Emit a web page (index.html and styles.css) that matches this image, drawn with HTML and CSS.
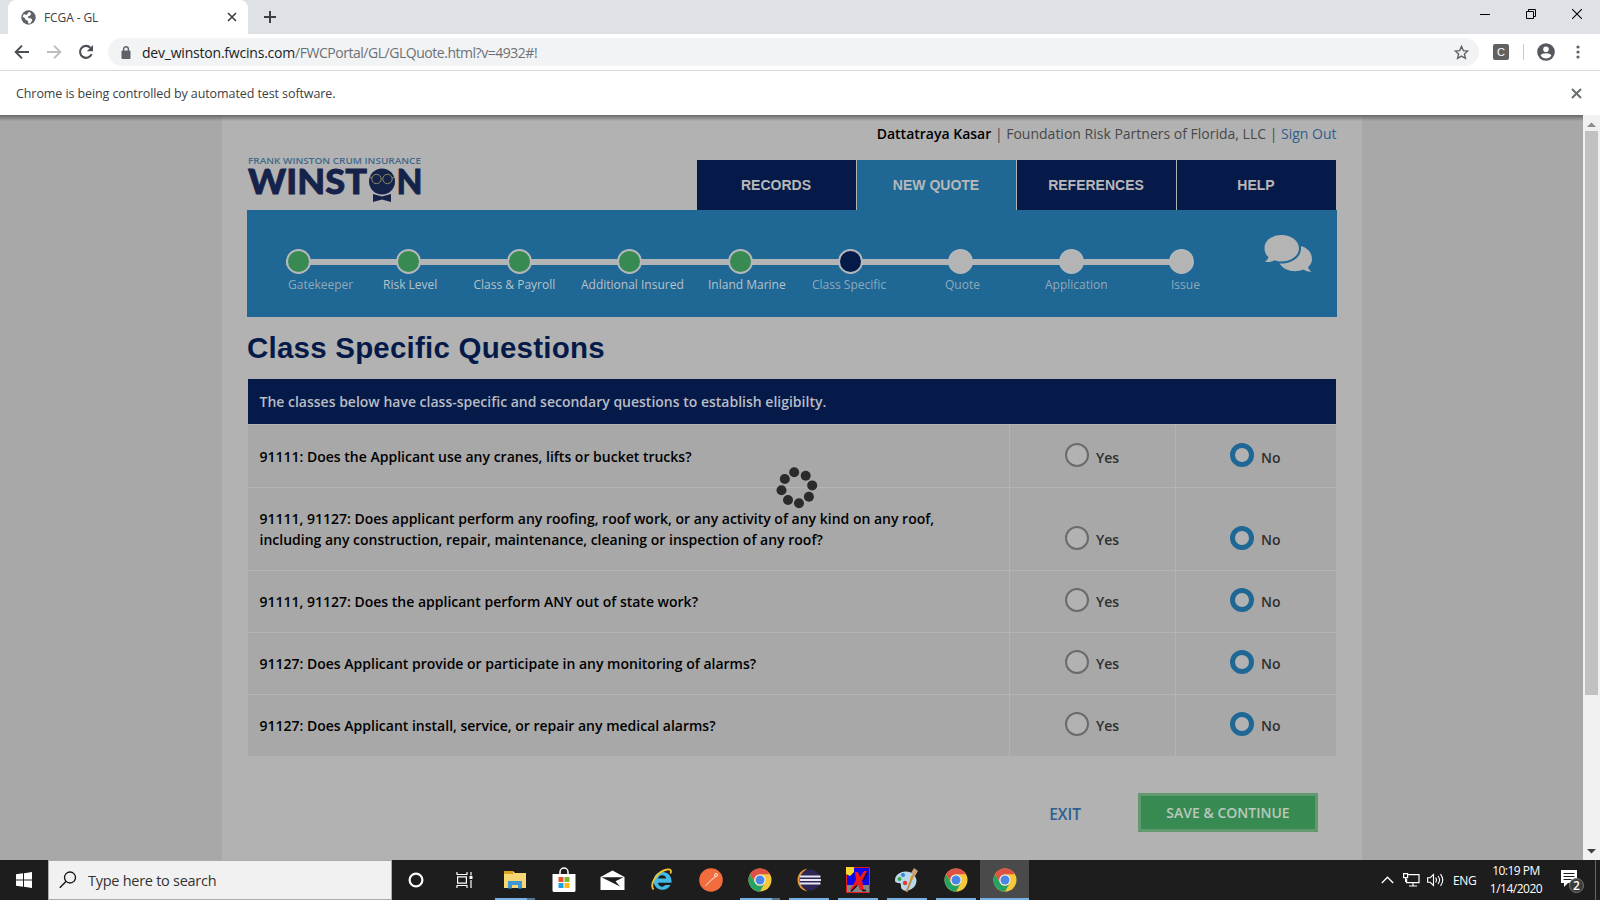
FILE: index.html
```html
<!DOCTYPE html>
<html lang="en">
<head>
<meta charset="utf-8">
<title>FCGA - GL</title>
<link rel="stylesheet" href="styles.css">
</head>
<body>
<svg width="0" height="0" class="defs">
  <symbol id="chrome" viewBox="0 0 24 24">
    <circle cx="12" cy="12" r="11.5" fill="#f5c83b"/>
    <path d="M2 6.3A11.5 11.5 0 0 1 22 6.3H12A5.7 5.7 0 0 0 7 15z" fill="#de5145"/>
    <path d="M2 6.3A11.5 11.5 0 0 0 12 23.5L17 14.8A5.7 5.7 0 0 1 7 14.9z" fill="#25a265"/>
    <circle cx="12" cy="12" r="5.6" fill="#f2f2f2"/>
    <circle cx="12" cy="12" r="4.5" fill="#4a86e8"/>
  </symbol>
</svg>

<header class="tabstrip">
  <div class="tab">
    <svg class="globe" width="15" height="15" viewBox="0 0 16 16"><circle cx="8" cy="8" r="7.7" fill="#5f6368"/><path d="M8.5 1.8L11 4 9.5 6 7.2 6.8 8 8.5 11 9l1 2-2 3.3-2.2.2-.3-2.8L5 10.5 3.5 8 1.7 7.4 3 4.2 6 5.2z" fill="#fff"/></svg>
    <span class="tab-title">FCGA - GL</span>
    <svg width="10" height="10" viewBox="0 0 10 10"><path d="M1 1l8 8M9 1L1 9" stroke="#3c4043" stroke-width="1.6"/></svg>
  </div>
  <svg class="plus" width="14" height="14" viewBox="0 0 14 14"><path d="M7 1v12M1 7h12" stroke="#3c4043" stroke-width="2"/></svg>
  <div class="winbtns">
    <svg width="10" height="12" viewBox="0 0 10 12"><path d="M0 6.5h10" stroke="#000"/></svg>
    <svg width="10" height="10" viewBox="0 0 10 10"><path d="M.5 2.5h7v7h-7zM2.5 2.5v-2h7v7h-2" fill="none" stroke="#000"/></svg>
    <svg width="10" height="10" viewBox="0 0 10 10"><path d="M0 0l10 10M10 0L0 10" stroke="#000" stroke-width="1.1"/></svg>
  </div>
</header>

<div class="toolbar">
  <div class="navicons">
    <svg width="16" height="16" viewBox="0 0 16 16"><path d="M15 8H2M8 1.6L1.7 8 8 14.4" fill="none" stroke="#4b4f54" stroke-width="2"/></svg>
    <svg width="16" height="16" viewBox="0 0 16 16"><path d="M1 8h13M8 1.6L14.3 8 8 14.4" fill="none" stroke="#bcbec1" stroke-width="2"/></svg>
    <svg width="16" height="16" viewBox="0 0 16 16"><path d="M13.6 10.2A6 6 0 1 1 12.4 3.7" fill="none" stroke="#4b4f54" stroke-width="2.1"/><path d="M15 1v6.3H8.8z" fill="#4b4f54"/></svg>
  </div>
  <div class="omnibox">
    <svg width="10" height="13" viewBox="0 0 10 13"><path d="M1 5h8v7.5H1z" fill="#5f6368" stroke="#5f6368"/><path d="M2.6 5V3.2a2.4 2.4 0 0 1 4.8 0V5" fill="none" stroke="#5f6368" stroke-width="1.4"/></svg>
    <span class="url"><b>dev_winston.fwcins.com</b>/FWCPortal/GL/GLQuote.html?v=4932#!</span>
    <svg class="star" width="15" height="15" viewBox="0 0 15 15"><path d="M7.5 1.4l1.8 4.2 4.5.4-3.4 3 1 4.4-3.900-2.300-3.900 2.300 1-4.400-3.400-3 4.500-.4z" fill="none" stroke="#5f6368" stroke-width="1.4"/></svg>
  </div>
  <span class="ext">C</span>
  <span class="tsep"></span>
  <svg class="avatar" width="18" height="18" viewBox="0 0 18 18"><circle cx="9" cy="9" r="8.8" fill="#55585d"/><circle cx="9" cy="6.2" r="2.8" fill="#fff"/><path d="M3.6 12.6c1-3 9.800-3 10.800 0a6.600 6.600 0 0 1-10.800 0z" fill="#fff"/></svg>
  <svg width="4" height="14" viewBox="0 0 4 14"><g fill="#5f6368"><circle cx="2" cy="2" r="1.6"/><circle cx="2" cy="7" r="1.6"/><circle cx="2" cy="12" r="1.6"/></g></svg>
</div>

<div class="infobar">
  <span>Chrome is being controlled by automated test software.</span>
  <svg width="11" height="11" viewBox="0 0 11 11"><path d="M1 1l9 9M10 1l-9 9" stroke="#6a6d70" stroke-width="2"/></svg>
</div>

<div class="viewport">
  <main class="page">
    <div class="userline"><b>Dattatraya Kasar</b> | Foundation Risk Partners of Florida, LLC | <a>Sign Out</a></div>
    <div class="masthead">
      <svg class="logo" width="176" height="48" viewBox="0 0 176 48">
        <text x="1" y="7.500" class="logo-top" textLength="173" lengthAdjust="spacingAndGlyphs">FRANK WINSTON CRUM INSURANCE</text>
        <text x="1" y="37.500" class="logo-main" textLength="119" lengthAdjust="spacingAndGlyphs">WINST</text>
        <text x="149.500" y="37.500" class="logo-main" textLength="26" lengthAdjust="spacingAndGlyphs">N</text>
        <circle cx="135" cy="25.500" r="13" fill="#15224a"/>
        <path d="M126 38l9 2.500 9-2.500v8l-9-2.500-9 2.500z" fill="#15224a"/>
        <g fill="none" stroke="#8a8b5c"><circle cx="129.500" cy="23" r="4.700"/><circle cx="140.500" cy="23" r="4.700"/><path d="M123 21l2 1M147 21l-2 1"/></g>
      </svg>
      <nav class="mainnav"><a>RECORDS</a><a class="on">NEW QUOTE</a><a>REFERENCES</a><a>HELP</a></nav>
    </div>
    <section class="progress">
      <div class="steps">
        <div class="track"><i class="done"></i><i class="done"></i><i class="done"></i><i class="done"></i><i class="done"></i><i class="current"></i><i></i><i></i><i></i></div>
        <div class="labels"><span class="dim">Gatekeeper</span><span>Risk Level</span><span>Class &amp; Payroll</span><span>Additional Insured</span><span>Inland Marine</span><span class="dim">Class Specific</span><span class="dim">Quote</span><span class="dim">Application</span><span class="dim">Issue</span></div>
      </div>
      <svg class="chat" width="49" height="39" viewBox="0 0 49 39"><path d="M37 12c7 2 11 7 11 13 0 3.500-1.500 6-4 8 .5 2 2 3.500 3.500 4.500-3 .5-6-.5-8-2C31 39 20 37 15.500 29.500 27 30 38 24 37 12z" fill="#b4b4b4"/><path d="M17.500 1C27 1 35 6.500 35 14.200S27 27.500 17.500 27.500c-2.500 0-5-.4-7-1.200C8 28 4 28.500 1 27.500c2-1.200 3-2.500 3.500-4.500C2 21 .5 17.800.5 14.200.5 6.500 8 1 17.500 1z" fill="#b4b4b4"/></svg>
    </section>

    <h1>Class Specific Questions</h1>

    <section class="questions">
      <div class="qhead">The classes below have class-specific and secondary questions to establish eligibilty.</div>
      <div class="qrow"><p>91111: Does the Applicant use any cranes, lifts or bucket trucks?</p><label><i></i><span>Yes</span></label><label><i class="sel"></i><span>No</span></label></div>
      <div class="qrow tall"><p>91111, 91127: Does applicant perform any roofing, roof work, or any activity of any kind on any roof,<br>including any construction, repair, maintenance, cleaning or inspection of any roof?</p><label><i></i><span>Yes</span></label><label><i class="sel"></i><span>No</span></label></div>
      <div class="qrow"><p>91111, 91127: Does the applicant perform ANY out of state work?</p><label><i></i><span>Yes</span></label><label><i class="sel"></i><span>No</span></label></div>
      <div class="qrow"><p>91127: Does Applicant provide or participate in any monitoring of alarms?</p><label><i></i><span>Yes</span></label><label><i class="sel"></i><span>No</span></label></div>
      <div class="qrow"><p>91127: Does Applicant install, service, or repair any medical alarms?</p><label><i></i><span>Yes</span></label><label><i class="sel"></i><span>No</span></label></div>
    </section>

    <div class="actions"><a>EXIT</a><button>SAVE &amp; CONTINUE</button></div>
  </main>
  <div class="scrollbar">
    <svg width="9" height="5" viewBox="0 0 9 5"><path d="M0 5l4.500-4.500L9 5z" fill="#8b8b8b"/></svg>
    <div class="thumb"></div>
    <svg class="down" width="9" height="5" viewBox="0 0 9 5"><path d="M0 0l4.500 4.500L9 0z" fill="#404040"/></svg>
  </div>
  <svg class="spinner" width="42" height="42" viewBox="776 467 42 42"><g fill="#2b2b2b"><circle cx="794.200" cy="472.300" r="5"/><circle cx="805.700" cy="475.700" r="5"/><circle cx="812.200" cy="485.400" r="5"/><circle cx="808.900" cy="496.700" r="5"/><circle cx="799" cy="503.300" r="5"/><circle cx="788" cy="500" r="5"/><circle cx="781.500" cy="490.200" r="5"/><circle cx="784.800" cy="479" r="5"/></g></svg>
</div>

<footer class="taskbar">
  <div class="start"><svg width="16" height="16" viewBox="0 0 16 16"><path d="M0 2.300L7 1.300V7.600H0zM8 1.150L16 0v7.600H8zM0 8.400h7v6.300l-7-1zM8 8.400h8V16l-8-1.150z" fill="#fff"/></svg></div>
  <div class="search">
    <svg width="18" height="18" viewBox="0 0 18 18"><circle cx="11" cy="6.500" r="5.500" fill="none" stroke="#111" stroke-width="1.300"/><path d="M7 10.500L.8 16.700" stroke="#111" stroke-width="1.400"/></svg>
    <span>Type here to search</span>
  </div>
  <div class="apps">
    <span><svg width="18" height="18" viewBox="0 0 18 18"><circle cx="9" cy="9" r="6.400" fill="none" stroke="#fff" stroke-width="2.200"/></svg></span>
    <span><svg width="17" height="16" viewBox="0 0 17 16"><g fill="none" stroke="#fff" stroke-width="1.200"><path d="M1 0v2.500h10V0M1 16v-2.500h10V16M1.600 4.800h8.800v6.400H1.600zM15 0v3.500M15 8v8"/></g><path d="M13.500 4h3v3h-3z" fill="#fff"/></svg></span>
    <span class="open multi"><svg width="24" height="20" viewBox="0 0 24 20"><path d="M1 1h9l2 2h11v15H1z" fill="#f7d774"/><path d="M1 1h9v3H1z" fill="#dba520"/><path d="M5 18.500V11h14v7.500h-4V15H9v3.500z" fill="#3f97d3"/></svg></span>
    <span><svg width="24" height="26" viewBox="0 0 24 26"><path d="M8 8V5a4 4 0 0 1 8 0v3" fill="none" stroke="#fff" stroke-width="1.500"/><path d="M.5 7h23v16.500a1.500 1.500 0 0 1-1.500 1.500H2A1.500 1.500 0 0 1 .5 23.500z" fill="#fff"/><path d="M6.500 10h5v5h-5z" fill="#e8502e"/><path d="M12.500 10h5v5h-5z" fill="#7db82c"/><path d="M6.500 16h5v5h-5z" fill="#1ba1e2"/><path d="M12.500 16h5v5h-5z" fill="#fbb917"/></svg></span>
    <span><svg width="25" height="20" viewBox="0 0 25 20"><path d="M.5 7L12.500.5l12 6.500v13H.5z" fill="#fff"/><path d="M1.500 7.200h22l-8 4L20 16.500z" fill="#1d1d1d"/></svg></span>
    <span><svg width="24" height="24" viewBox="0 0 24 24"><path d="M21.500 12.500A9 9 0 1 0 20.500 17h-5.300a4 4 0 0 1-7.200-2.300h13.500zM8.200 10.500c.5-4.300 7.600-4.300 8 0z" fill="#43b9e8" fill-rule="evenodd"/><path d="M3.500 21.500C-1 15.500 8 3 17 1.500c4-.8 4.500 1.500 3.500 4" fill="none" stroke="#f3c332" stroke-width="1.800"/></svg></span>
    <span><svg width="24" height="24" viewBox="0 0 24 24"><circle cx="12" cy="12" r="11.800" fill="#f36c3d"/><path d="M6 17.500l5-5 5-4.500 1 1-5 4-5 5z" fill="#f9c6b1"/><circle cx="17" cy="7" r="1.500" fill="none" stroke="#ffe7dc"/></svg></span>
    <span class="open multi"><svg width="24" height="24"><use href="#chrome"/></svg></span>
    <span class="open"><svg width="24" height="24" viewBox="0 0 24 24"><path d="M10.500.5a11.600 11.600 0 0 0 0 23A13.500 13.500 0 0 1 10.500.5z" fill="#e59a37"/><circle cx="13" cy="12" r="10.500" fill="#2f2657"/><path d="M3 8.500h20.500M3 12h21M3 15.500h20.500" stroke="#e8e6f2" stroke-width="1.800"/></svg></span>
    <span class="open"><svg width="24" height="26" viewBox="0 0 24 26"><path d="M.5.5h23v25H.5z" fill="#1008e8" stroke="#e51b1b"/><path d="M1 18h22v7H1z" fill="#858585"/><path d="M0 0h8v5L4 9 0 7z" fill="#ffd92e"/><path d="M9 5h3l2 5 4-6h3l-5 10 2 9h-4l-2-6-5 6H4l6-10z" fill="#f1181c"/><path d="M5 24.500l6-6M16 23.500h4M17 14l4-8" stroke="#111" stroke-width="1.300"/></svg></span>
    <span class="open"><svg width="25" height="26" viewBox="0 0 25 26"><path d="M12 4.500C5 4.500 1 9 1 13c0 3 2 3 4 3s2 2 2 4 3 4.500 7 3.500c6-1.500 8.500-6 8.500-10S18 4.500 12 4.500z" fill="#b9d8e9"/><circle cx="5.500" cy="12" r="2" fill="#3fa648"/><circle cx="9" cy="8" r="2" fill="#3687d0"/><circle cx="11" cy="16" r="2.200" fill="#df3d34"/><circle cx="18" cy="11" r="2" fill="#f2bc3d"/><path d="M12.500 25L19 8" stroke="#c58b42" stroke-width="2"/><path d="M17 6l3-5 4 3-3 5z" fill="#c9a277"/></svg></span>
    <span class="open"><svg width="24" height="24"><use href="#chrome"/></svg></span>
    <span class="open active"><svg width="24" height="24"><use href="#chrome"/></svg></span>
  </div>
  <div class="tray">
    <svg width="13" height="8" viewBox="0 0 13 8"><path d="M.8 7L6.500 1.200 12.200 7" fill="none" stroke="#fff" stroke-width="1.300"/></svg>
    <svg class="net" width="17" height="14" viewBox="0 0 17 14"><g fill="none" stroke="#fff" stroke-width="1.200"><path d="M5 1.600h11v8H3.600V6M10 9.600V13M6 13h8M.6.600h4v4h-4zM2.600 4.600V9"/></g></svg>
    <svg class="vol" width="17" height="14" viewBox="0 0 17 14"><g fill="none" stroke="#fff" stroke-width="1.100"><path d="M.6 4.700h2.600L6.500 1.500v11L3.200 9.300H.6zM8.500 4.700q2 2.300 0 4.600M11 3q3.200 4 0 8M13.500 1.200q4.500 5.800 0 11.600"/></g></svg>
    <span class="lang">ENG</span>
    <div class="clock"><span>10:19 PM</span><span>1/14/2020</span></div>
    <div class="notif"><svg width="16" height="17" viewBox="0 0 16 17"><path d="M0 0h16v13H7l-4 4v-4H0z" fill="#fff"/><path d="M2.500 3.500h11M2.500 6.500h11M2.500 9.500h8" stroke="#1d1d1d"/></svg><b>2</b></div>
    <span class="peek"></span>
  </div>
</footer>
</body>
</html>
```

FILE: styles.css
```css
* { box-sizing: border-box; }
body { margin: 0; width: 1600px; height: 900px; overflow: hidden; display: flex; flex-direction: column; font-family: "Open Sans", sans-serif; color: #3c4043; background: #fff; }
svg { display: block; flex: none; }
.defs { position: absolute; }

.tabstrip { height: 34px; background: #dee1e6; display: flex; align-items: center; padding-left: 8px; }
.tab { width: 240px; height: 34px; background: #fff; border-radius: 8px 8px 0 0; display: flex; align-items: center; padding: 0 11px 0 13px; }
.tab-title { flex: 1; margin-left: 8px; font-size: 12px; letter-spacing: -.1px; }
.plus { margin-left: 15px; }
.winbtns { margin-left: auto; display: flex; gap: 36px; align-items: center; padding: 0 18px 6px 0; }

.toolbar { height: 37px; display: flex; align-items: center; border-bottom: 1px solid #d9dadc; padding: 0 20px 0 14px; }
.navicons { display: flex; gap: 16px; }
.omnibox { margin-left: 14px; width: 1371px; height: 28px; border-radius: 14px; background: #f1f3f4; display: flex; align-items: center; padding: 0 10px 0 13px; }
.url { flex: 1; margin-left: 11px; font-size: 14px; letter-spacing: -.47px; color: #6d7175; }
.url b { font-weight: 400; color: #202124; letter-spacing: -.21px; }
.ext { width: 16px; height: 16px; margin-left: 14px; border-radius: 2px; background: #616161; color: #fff; font: 11px/16px "Liberation Sans", sans-serif; text-align: center; }
.tsep { width: 1px; height: 16px; margin: 0 13px 0 14px; background: #c8cacd; }
.avatar { margin: 0 auto 0 0; }

.infobar { height: 44px; display: flex; align-items: center; justify-content: space-between; padding: 0 18px 0 16px; font-size: 12.500px; letter-spacing: -.09px; }

.viewport { height: 745px; background: #a8a8a8; display: flex; position: relative; padding-left: 222px; }
.viewport::before { content: ""; position: absolute; left: 0; top: 0; width: 1583px; height: 6px; background: linear-gradient(#686868, rgba(120,120,120,0)); }
.page { width: 1140px; height: 745px; background: #b2b2b2; padding: 0 25px; font-size: 14px; }
.userline { height: 45px; line-height: 38px; text-align: right; color: #484848; padding-right: .5px; white-space: nowrap; }
.userline b { font-weight: 600; color: #000; }
.userline a { color: #315f8c; }
.masthead { height: 50px; display: flex; justify-content: space-between; padding-right: 1px; }
.logo { margin-top: -4px; overflow: visible; }
.logo-top { font: 600 8.500px "Open Sans", sans-serif; fill: #42698a; }
.logo-main { font: 900 35px Lato, sans-serif; fill: #15224a; stroke: #15224a; stroke-width: .8px; }
.mainnav { display: flex; gap: 1px; background: #b2b2b2; }
.mainnav a { width: 159px; height: 50px; background: #061a49; color: #b8b8b8; font: bold 14px/51px "Liberation Sans", sans-serif; text-align: center; padding-right: 1px; }
.mainnav a.on { background: #1f6795; }

.progress { height: 107px; background: #1f6795; display: flex; justify-content: space-between; padding: 24px 24px 0 39px; }
.steps { width: 915px; padding-top: 15px; }
.track { display: flex; justify-content: space-between; width: 908px; height: 25px; background: linear-gradient(#b4b4b4, #b4b4b4) 0 10px / 900px 6px no-repeat; }
.track i { width: 25px; height: 25px; border-radius: 50%; background: #b4b4b4; border: 2px solid #b4b8ba; }
.track .done { background: #388a53; }
.track .current { background: #061a49; }
.labels { display: grid; grid-template-columns: 95px 90.500px 107.500px 127px 104px 133px 100px 126px 60px; padding: 2px 0 0 2px; font-size: 12px; line-height: 17px; color: #b8c2c8; white-space: nowrap; }
.labels .dim { color: #8fa9b9; }

h1 { margin: 0; height: 62px; padding-top: 12px; font: bold 29.500px/37px "Liberation Sans", sans-serif; letter-spacing: .22px; color: #061a49; }
.questions { width: 1088px; margin-left: 1px; background: #a8a8a8; color: #2f2f2f; }
.qhead { height: 45px; line-height: 45px; padding-left: 11.500px; background: #061a49; color: #b8bcc4; font-weight: 600; }
.qrow { height: 62px; display: grid; grid-template-columns: 761px 166px 161px; border-top: 1px solid #b4b4b4; }
.qhead + .qrow { height: 63px; }
.qrow p { margin: 0; padding: 20px 0 0 11.500px; line-height: 21px; font-weight: 600; color: #000; white-space: nowrap; }
.qhead + .qrow p { padding-top: 21px; }
.qrow label { display: flex; align-items: center; gap: 7px; padding: 0 0 4px 55px; border-left: 1px solid #b4b4b4; font-weight: 600; }
.qhead + .qrow label { padding-bottom: 2px; }
.qrow label + label { padding-left: 54px; }
.qrow label span { padding-top: 4px; }
.qrow i { width: 24px; height: 24px; border-radius: 50%; border: 2px solid #6b6b6b; background: #b2b2b2; }
.qrow i.sel { border: 5px solid #1f6795; }
.qrow.tall { height: 83px; }
.qrow.tall label { padding-top: 19px; padding-bottom: 2px; }

.actions { display: flex; justify-content: flex-end; align-items: center; gap: 57px; padding: 37px 19px 0 0; }
.actions a { padding-top: 2px; font-size: 15.500px; color: #2c5f92; font-weight: 600; }
.actions button { width: 180px; height: 39px; padding: 0; border: 3px solid #62996f; background: #388a53; color: #b9c9be; font: 600 14px "Open Sans", sans-serif; }

.scrollbar { margin-left: auto; width: 17px; background: #f1f1f1; display: flex; flex-direction: column; align-items: center; padding: 7px 0 6px; }
.thumb { width: 13px; height: 564px; margin-top: 4px; background: #c1c1c1; }
.down { margin-top: auto; }
.spinner { position: absolute; left: 776px; top: 352px; }

.taskbar { height: 40px; background: #1d1d1d; display: flex; }
.start { width: 48px; display: flex; align-items: center; justify-content: center; }
.search { width: 344px; background: #f1f1f1; border: 1px solid #aaa; display: flex; align-items: center; gap: 11px; padding-left: 10px; font-size: 14.500px; letter-spacing: -.27px; color: #333; }
.apps { display: flex; }
.apps span { width: 49px; height: 40px; display: flex; align-items: center; justify-content: center; }
.apps span:nth-child(-n+2) { padding-right: 2px; }
.open { background: linear-gradient(#76b0e4, #76b0e4) 50% 100% / 40px 2px no-repeat; }
.multi { background: linear-gradient(90deg, #76b0e4 32px, #557692 32px) 50% 100% / 40px 2px no-repeat; }
.active { background: linear-gradient(#76b0e4, #76b0e4) 50% 100% / 100% 2px no-repeat #4a4a4a; }
.tray { margin-left: auto; display: flex; align-items: center; color: #fff; font-size: 12px; }
.net { margin-left: 9px; }
.vol { margin-left: 7px; }
.lang { margin-left: 9px; width: 25px; letter-spacing: -.3px; }
.clock { width: 58px; margin-left: 9px; display: flex; flex-direction: column; text-align: center; line-height: 18px; letter-spacing: -.5px; white-space: nowrap; }
.notif { position: relative; width: 24px; height: 24px; margin-left: 16px; padding-top: 2px; }
.notif b { position: absolute; left: 8px; top: 10px; width: 15px; height: 15px; border-radius: 50%; border: 1px solid #777; background: #3b3b3b; font: 600 12px/13px "Open Sans", sans-serif; text-align: center; }
.peek { width: 1px; height: 40px; margin: 0 4px 0 10px; background: #666; }
```
